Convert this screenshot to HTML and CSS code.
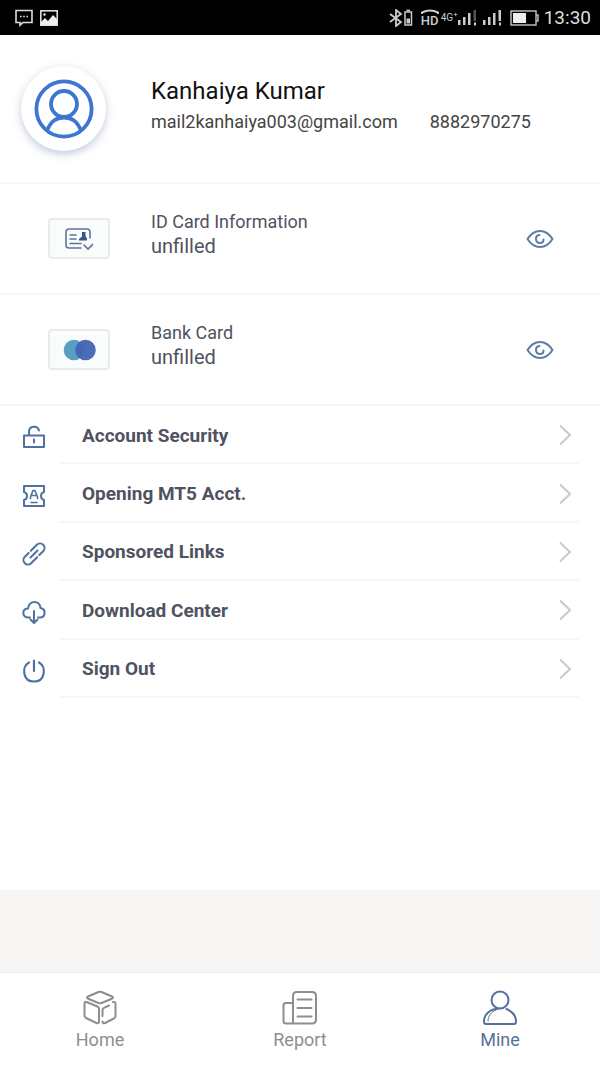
FILE: index.html
```html
<!DOCTYPE html>
<html lang="en">
<head>
    <meta charset="UTF-8">
    <meta name="viewport" content="width=device-width, initial-scale=1.0">
    <title>Mine</title>
    <link rel="stylesheet" href="styles.css">
</head>
<body>
    <div class="status-bar">
        <div class="status-left">
            <svg width="18" height="18" viewBox="0 0 18 18" fill="none" stroke="#ddd" stroke-width="1.6">
                <path d="M1 1.5h16v12H8l-3 2.700v-2.700H1z"/>
                <path d="M5 7.500h1.600M8.200 7.500h1.600M11.400 7.500H13"/>
            </svg>
            <svg width="18" height="16" viewBox="0 0 18 16">
                <rect x="0.800" y="0.800" width="16.400" height="14.400" fill="none" stroke="#ddd" stroke-width="1.600"/>
                <path d="M1 14V12l4-4 3 3 5-6 4 4v6H1z" fill="#eee"/>
                <circle cx="4.500" cy="4.500" r="1.200" fill="#eee"/>
            </svg>
        </div>
        <div class="status-right">
            <svg class="bluetooth" width="24" height="18" viewBox="0 0 24 18" fill="none" stroke="#ccc" stroke-width="1.800">
                <path d="M1 5l11 8-5 4V1l5 4-11 8"/>
                <rect x="16" y="3" width="6.500" height="13" stroke-width="1.500"/>
                <path d="M17.500 1.500h3.500"/>
                <path d="M17.500 12h3.500" stroke-width="5"/>
            </svg>
            <span class="hd">
                <svg width="18" height="6" viewBox="0 0 18 6" fill="none" stroke="#ccc" stroke-width="2">
                    <path d="M1 5V3.500Q9-0.500 17 3.500V5"/>
                </svg>
                <span>HD</span>
            </span>
            <span class="network">4G<sup>+</sup></span>
            <svg class="signal" width="20" height="17" viewBox="0 0 20 17" fill="#ccc">
                <path d="M0 11h2.500v5H0zM5 8h2.500v8H5zM10 4h2.500v12H10z"/>
                <path d="M15.500 1h2.500v11h-2.500z" fill="#555"/>
                <path d="M16 13.500h2v3h-2z"/>
            </svg>
            <svg width="20" height="17" viewBox="0 0 20 17" fill="#ccc">
                <path d="M0 11h2.500v5H0zM5 8h2.500v8H5zM10 4h2.500v12H10zM15.500 1h2.500v11h-2.500zM16 13.500h2v3h-2z"/>
            </svg>
            <svg class="battery" width="29" height="16" viewBox="0 0 29 16">
                <path d="M1 1h25v14H1zM26 5h2v6h-2" fill="none" stroke="#bbb" stroke-width="1.500"/>
                <rect x="3" y="3" width="13" height="10" fill="#eee"/>
            </svg>
            <span class="clock">13:30</span>
        </div>
    </div>

    <main class="content">
        <section class="profile">
            <div class="avatar">
                <svg width="60" height="60" viewBox="0 0 60 60" fill="none" stroke="#3c76ce" stroke-width="3.800">
                    <circle cx="30" cy="30" r="27.600"/>
                    <circle cx="30" cy="25" r="13"/>
                    <path d="M13 51.500C17 42 22 38.500 30 38.500s13 3.500 17 13"/>
                </svg>
            </div>
            <div class="profile-info">
                <h1 class="profile-name">Kanhaiya Kumar</h1>
                <div class="profile-contact">
                    <span>mail2kanhaiya003@gmail.com</span>
                    <span>8882970275</span>
                </div>
            </div>
        </section>

        <section class="card-row">
            <div class="card-thumb">
                <svg width="28" height="24" viewBox="1 0 28 24" fill="none" stroke="#59779f" stroke-width="1.600" stroke-linecap="round">
                    <path d="M26 11V5q0-3-3-3H5Q2 2 2 5v13q0 3 3 3h12"/>
                    <path d="M6 8h6M6 12h6M6 16.500h11"/>
                    <path d="M20 18l4 4 5-5"/>
                    <path d="M18 5h3.500v4l1.500 2.500v2h-8v-1.500l3-2.500z" fill="#3c5488" stroke="none"/>
                </svg>
            </div>
            <div class="card-text">
                <h2 class="card-title">ID Card Information</h2>
                <p class="card-state">unfilled</p>
            </div>
            <button class="eye-btn" type="button" aria-label="View ID card">
                <svg width="28" height="20" viewBox="0 0 28 20" fill="none" stroke="#627ca0" stroke-width="2" stroke-linecap="round">
                    <path d="M1.500 10C5 4.500 9 2 14 2s9 2.500 12.500 8C23 15.500 19 18 14 18S5 15.500 1.500 10z"/>
                    <path d="M13.500 6C8.500 6.500 9 14 14 14c2 0 3.500-1.500 3.500-3.500"/>
                </svg>
            </button>
        </section>

        <section class="card-row">
            <div class="card-thumb">
                <svg width="34" height="22" viewBox="0 0 34 22">
                    <circle cx="12" cy="11" r="10.300" fill="#5a9fc0"/>
                    <circle cx="23.500" cy="11" r="10.300" fill="#4264b5" fill-opacity="0.950"/>
                </svg>
            </div>
            <div class="card-text">
                <h2 class="card-title">Bank Card</h2>
                <p class="card-state">unfilled</p>
            </div>
            <button class="eye-btn" type="button" aria-label="View bank card">
                <svg width="28" height="20" viewBox="0 0 28 20" fill="none" stroke="#627ca0" stroke-width="2" stroke-linecap="round">
                    <path d="M1.500 10C5 4.500 9 2 14 2s9 2.500 12.500 8C23 15.500 19 18 14 18S5 15.500 1.500 10z"/>
                    <path d="M13.500 6C8.500 6.500 9 14 14 14c2 0 3.500-1.500 3.500-3.500"/>
                </svg>
            </button>
        </section>

        <nav class="menu">
            <a class="menu-item" href="#security">
                <svg class="menu-icon" viewBox="0 0 24 24">
                    <path d="M2 10.500h20V22H2zM7 10.500V7c0-6.500 8.500-7 10-1.500M12 14.500v3"/>
                </svg>
                <span class="menu-label">Account Security
                    <svg class="chevron" viewBox="0 0 14 22"><path d="M2 1.500l10 9.500-10 9.500"/></svg>
                </span>
            </a>
            <a class="menu-item" href="#mt5">
                <svg class="menu-icon" viewBox="0 0 24 24">
                    <path d="M2 2h20v6c-4 1-4 7 0 8v6H2v-6c4-1 4-7 0-8z"/>
                    <path d="M8.500 14.500V13L11 6.500h2l2.500 6.500v1.500M10 11.500h4M9 18.500h6" stroke-width="1.600"/>
                </svg>
                <span class="menu-label">Opening MT5 Acct.
                    <svg class="chevron" viewBox="0 0 14 22"><path d="M2 1.500l10 9.500-10 9.500"/></svg>
                </span>
            </a>
            <a class="menu-item" href="#links">
                <svg class="menu-icon" viewBox="0 0 24 24">
                    <g transform="rotate(-45 12 12)">
                        <path d="M9 7.500H3.500a4.500 4.500 0 0 0 0 9h8.500"/>
                        <path d="M15 16.500h5.500a4.500 4.500 0 0 0 0-9H12M7 12h10"/>
                    </g>
                </svg>
                <span class="menu-label">Sponsored Links
                    <svg class="chevron" viewBox="0 0 14 22"><path d="M2 1.500l10 9.500-10 9.500"/></svg>
                </span>
            </a>
            <a class="menu-item" href="#download">
                <svg class="menu-icon" viewBox="0 0 24 24">
                    <path d="M8 17.500H6C0 17-.500 9 6 8.500 7-.500 18 0 18.500 8c6 1 5 9.500-.500 9.500h-2"/>
                    <path d="M12 11v11.500M8.500 19.500l3.500 3.500 3.500-3.500"/>
                </svg>
                <span class="menu-label">Download Center
                    <svg class="chevron" viewBox="0 0 14 22"><path d="M2 1.500l10 9.500-10 9.500"/></svg>
                </span>
            </a>
            <a class="menu-item" href="#signout">
                <svg class="menu-icon" viewBox="0 0 24 24">
                    <path d="M7 3.500C-1 8 1 22.500 12 22.500S25 8 17 3.500M12 1.500V12" stroke-width="2.200"/>
                </svg>
                <span class="menu-label">Sign Out
                    <svg class="chevron" viewBox="0 0 14 22"><path d="M2 1.500l10 9.500-10 9.500"/></svg>
                </span>
            </a>
        </nav>
    </main>

    <nav class="tab-bar">
        <a class="tab" href="#home">
            <svg class="tab-icon" viewBox="0 0 36 36">
                <path d="M6 6.500l10.500-4.500q1.500-.500 3 0l10.500 4.500q2 1 0 2.200l-10.500 4.300q-1.500.500-3 0L6 8.700q-2-1.200 0-2.200z"/>
                <path d="M4.500 12l11 4.500q1.500.700 1.500 2.500v12.500q0 2.500-2.500 1.500L4 28q-1.500-1-1.500-2.500V13.500q0-2 2-1.500z"/>
                <path d="M31 12q2.500-.500 2.500 2v12q0 1.500-1.500 2.500l-9 4.500q-2.500 1-2.500-1.500M20.500 26v-6q0-1.500 1.500-2.200l5-2.300"/>
            </svg>
            <span>Home</span>
        </a>
        <a class="tab" href="#report">
            <svg class="tab-icon" viewBox="0 0 36 36">
                <path d="M11 33.500V6q0-4 4-4h15q4 0 4 4v23.500q0 4-4 4H4q-2.500 0-2.500-2.500V15.500q0-2.500 2.500-2.500h7"/>
                <path d="M15.500 9.500h14M15.500 18h14M15.500 26.500h14"/>
            </svg>
            <span>Report</span>
        </a>
        <a class="tab active" href="#mine">
            <svg class="tab-icon" viewBox="0 0 36 36">
                <circle cx="18" cy="10" r="8.500"/>
                <path d="M17 18.500C7 19 2 25 2 31.500Q2 34 4 34h28q2 0 2-2.500c0-6-4-10-9.500-12.500"/>
                <path d="M6 31c0-5 3-9 8-11" stroke-width="1"/>
            </svg>
            <span>Mine</span>
        </a>
    </nav>
</body>
</html>
```

FILE: styles.css
```css
* {
    box-sizing: border-box;
}

body {
    display: flex;
    flex-direction: column;
    min-height: 100vh;
    margin: 0;
    font-family: Roboto, sans-serif;
    background-color: #f7f6f5;
    color: #4f535f;
}

h1, h2, p {
    margin: 0;
    font-weight: normal;
}

a {
    color: inherit;
    text-decoration: none;
}

svg {
    display: block;
    flex-shrink: 0;
}

/* status bar */
.status-bar {
    display: flex;
    justify-content: space-between;
    align-items: center;
    height: 35px;
    padding: 0 9px 0 15px;
    background-color: #000;
    color: #ccc;
}

.status-left,
.status-right {
    display: flex;
    align-items: center;
}

.status-left {
    gap: 7px;
}

.hd {
    display: flex;
    flex-direction: column;
    align-items: center;
    margin: 0 2px 0 8px;
    font-size: 13px;
    font-weight: 500;
    line-height: 11px;
}

.network {
    font-size: 10px;
    line-height: 16px;
}

.network sup {
    font-size: 8px;
    line-height: 1;
}

.signal {
    margin-right: 5px;
}

.battery {
    margin: 0 5px 0 7px;
}

.clock {
    font-size: 19px;
    color: #ddd;
}

/* content */
.content {
    flex: 1;
    margin-bottom: 82px;
    background-color: #fff;
}

.profile {
    display: flex;
    align-items: center;
    gap: 45px;
    height: 149px;
    padding: 0 21px;
    border-bottom: 2px solid #f5f6f7;
}

.avatar {
    display: flex;
    align-items: center;
    justify-content: center;
    width: 85px;
    height: 85px;
    flex-shrink: 0;
    border-radius: 50%;
    background-color: #fff;
    box-shadow: 0 3px 8px rgba(50, 80, 130, 0.3);
}

.profile-info {
    padding-bottom: 6px;
}

.profile-name {
    font-size: 24px;
    line-height: 32px;
    color: #111;
}

.profile-contact {
    display: flex;
    flex-wrap: wrap;
    column-gap: 32px;
    font-size: 18px;
    line-height: 30px;
    color: #444;
}

.card-row {
    display: flex;
    align-items: center;
    height: 111px;
    padding: 0 46px 0 48px;
    border-bottom: 2px solid #f5f6f7;
}

.card-thumb {
    display: flex;
    align-items: center;
    justify-content: center;
    width: 62px;
    height: 41px;
    border: 2px solid #e6ebed;
    border-radius: 4px;
    background-color: #fafbfb;
}

.card-text {
    flex: 1;
    padding: 0 0 10px 41px;
    line-height: 24px;
}

.card-title {
    font-size: 18px;
    line-height: 24px;
}

.card-state {
    font-size: 20px;
}

.eye-btn {
    padding: 0;
    border: none;
    background: none;
    cursor: pointer;
}

/* menu */
.menu {
    display: grid;
    grid-auto-rows: 1fr;
    min-height: 292px;
}

.menu-item {
    display: flex;
    align-items: center;
    gap: 14px;
    padding: 0 21px 0 22px;
}

.menu-icon {
    width: 24px;
    height: 24px;
    margin-top: 4px;
    fill: none;
    stroke: #50719f;
    stroke-width: 2;
    stroke-linecap: round;
    stroke-linejoin: round;
}

.menu-label {
    display: flex;
    flex: 1;
    align-items: center;
    justify-content: space-between;
    align-self: stretch;
    padding: 2px 7px 0 22px;
    border-bottom: 2px solid #f5f6f7;
    font-size: 19px;
    font-weight: bold;
}

.chevron {
    width: 14px;
    height: 22px;
    fill: none;
    stroke: #c8c9ca;
    stroke-width: 2;
}

/* bottom tabs */
.tab-bar {
    display: flex;
    height: 95px;
    background-color: #fff;
    border-top: 1px solid #efefef;
}

.tab {
    display: flex;
    flex: 1;
    flex-direction: column;
    align-items: center;
    gap: 2px;
    padding-top: 17px;
    font-size: 18px;
    line-height: 24px;
    color: #8e8e8e;
}

.tab.active {
    color: #57719b;
}

.tab-icon {
    width: 36px;
    height: 36px;
    fill: none;
    stroke: currentColor;
    stroke-width: 2;
    stroke-linecap: round;
    stroke-linejoin: round;
}
```
